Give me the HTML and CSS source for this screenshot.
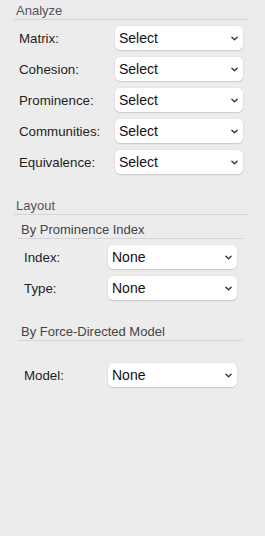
FILE: index.html
```html
<!DOCTYPE html>
<html>

<head>
  <meta charset="utf-8" />
  <title>Network Tools</title>
  <link rel="stylesheet" href="styles.css">
</head>

<body>
  <div class="panel">
    <section class="group">
      <h2 class="group-title">Analyze</h2>
      <div class="rows analyze-rows">
        <label class="row">
          <span class="row-label">Matrix:</span>
          <span class="picker"><select><option>Select</option></select><svg class="chev" viewBox="0 0 8 5"><path d="M1 1l3 3 3-3" /></svg></span>
        </label>
        <label class="row">
          <span class="row-label">Cohesion:</span>
          <span class="picker"><select><option>Select</option></select><svg class="chev" viewBox="0 0 8 5"><path d="M1 1l3 3 3-3" /></svg></span>
        </label>
        <label class="row">
          <span class="row-label">Prominence:</span>
          <span class="picker"><select><option>Select</option></select><svg class="chev" viewBox="0 0 8 5"><path d="M1 1l3 3 3-3" /></svg></span>
        </label>
        <label class="row">
          <span class="row-label">Communities:</span>
          <span class="picker"><select><option>Select</option></select><svg class="chev" viewBox="0 0 8 5"><path d="M1 1l3 3 3-3" /></svg></span>
        </label>
        <label class="row">
          <span class="row-label">Equivalence:</span>
          <span class="picker"><select><option>Select</option></select><svg class="chev" viewBox="0 0 8 5"><path d="M1 1l3 3 3-3" /></svg></span>
        </label>
      </div>
    </section>

    <section class="group layout-group">
      <h2 class="group-title">Layout</h2>

      <div class="sub">
        <h3 class="sub-title">By Prominence Index</h3>
        <div class="rows layout-rows">
          <label class="row">
            <span class="row-label">Index:</span>
            <span class="picker"><select><option>None</option></select><svg class="chev" viewBox="0 0 8 5"><path d="M1 1l3 3 3-3" /></svg></span>
          </label>
          <label class="row">
            <span class="row-label">Type:</span>
            <span class="picker"><select><option>None</option></select><svg class="chev" viewBox="0 0 8 5"><path d="M1 1l3 3 3-3" /></svg></span>
          </label>
        </div>
      </div>

      <div class="sub force">
        <h3 class="sub-title">By Force-Directed Model</h3>
        <div class="rows layout-rows model-rows">
          <label class="row">
            <span class="row-label">Model:</span>
            <span class="picker"><select><option>None</option></select><svg class="chev" viewBox="0 0 8 5"><path d="M1 1l3 3 3-3" /></svg></span>
          </label>
        </div>
      </div>
    </section>
  </div>
</body>

</html>
```

FILE: styles.css
```css
* {
  margin: 0;
  padding: 0;
  box-sizing: border-box;
  font-family: "Liberation Sans", "Arial", sans-serif;
}

html,
body {
  width: 100%;
  height: 100%;
  background-color: #ececec;
}

.panel {
  padding: 3px 17px 0 14px;
}

.group-title {
  font-size: 13px;
  font-weight: normal;
  line-height: 16px;
  color: #555;
  padding-left: 2px;
  border-bottom: 1px solid #d4d4d4;
}

.layout-group {
  margin-top: 24px;
}

.rows {
  display: flex;
  flex-direction: column;
  gap: 7px;
}

.analyze-rows {
  margin-top: 6px;
  padding: 0 5px;
}

.row {
  display: grid;
  grid-template-columns: 96px 1fr;
  align-items: center;
  height: 24px;
}

.row-label {
  font-size: 13.3px;
  color: #1e1e1e;
}

.picker {
  position: relative;
  display: block;
  height: 24px;
}

.picker select {
  appearance: none;
  -webkit-appearance: none;
  width: 100%;
  height: 24px;
  border: 0;
  border-radius: 5px;
  background-color: #fff;
  box-shadow: 0 0 0 0.5px rgba(0, 0, 0, 0.05), 0 1px 1.5px rgba(0, 0, 0, 0.12);
  font-size: 14px;
  color: #111;
  padding-left: 4px;
  outline: none;
}

.chev {
  position: absolute;
  right: 5px;
  top: 10px;
  width: 7px;
  height: 5px;
  fill: none;
  stroke: #333;
  stroke-width: 1.5;
  stroke-linecap: round;
  stroke-linejoin: round;
  pointer-events: none;
}

.sub {
  margin: 7px 5px 0 4px;
}

.sub.force {
  margin-top: 24px;
}

.sub-title {
  font-size: 13px;
  font-weight: normal;
  line-height: 16px;
  color: #444;
  padding-left: 3px;
  border-bottom: 1px solid #d4d4d4;
}

.layout-rows {
  margin-top: 6px;
  padding: 0 6px;
}

.layout-rows .row {
  grid-template-columns: 84px 1fr;
}

.model-rows {
  margin-top: 22px;
}
```
